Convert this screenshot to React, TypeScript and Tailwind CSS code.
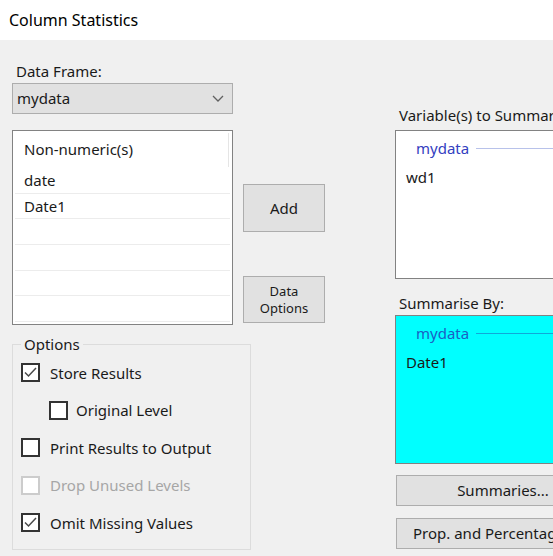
import React from "react";

const font = { fontFamily: '"Noto Sans", "Open Sans", sans-serif' };

function Check({ checked, disabled }: { checked?: boolean; disabled?: boolean }) {
  return (
    <div
      className={
        "w-[19px] h-[19px] shrink-0 border-2 bg-white flex items-center justify-center " +
        (disabled ? "border-[#cccccc]" : "border-[#333333]")
      }
    >
      {checked && (
        <svg width="15" height="15" viewBox="0 0 15 15">
          <polyline points="2,7.5 5.5,11 13,3" fill="none" stroke="#4a4a4a" strokeWidth="1.5" />
        </svg>
      )}
    </div>
  );
}

function Row({
  label,
  checked,
  disabled,
  indent,
}: {
  label: string;
  checked?: boolean;
  disabled?: boolean;
  indent?: boolean;
}) {
  return (
    <div className={"h-[37.5px] flex items-center " + (indent ? "pl-[36px]" : "pl-[8px]")}>
      <Check checked={checked} disabled={disabled} />
      <span
        className={
          "text-[15px] leading-[20px] " +
          (indent ? "ml-[8px] " : "ml-[10px] ") +
          (disabled ? "text-[#a6a6a6]" : "text-[#1a1a1a]")
        }
      >
        {label}
      </span>
    </div>
  );
}

function GroupHeader({ cyan }: { cyan?: boolean }) {
  return (
    <div className="h-[34px] flex items-center pl-[20px]">
      <span className={"text-[15px] leading-[20px] " + (cyan ? "text-[#1b5fc4]" : "text-[#3340c0]")}>
        mydata
      </span>
      <div className={"flex-1 h-px ml-[7px] " + (cyan ? "bg-[#10a8d8]" : "bg-[#b8c2ea]")} />
    </div>
  );
}

export default function App() {
  return (
    <div className="w-[553px] h-[556px] overflow-hidden bg-[#f0f0f0] text-[#1a1a1a]" style={font}>
      <div className="h-[40px] bg-white flex items-center pl-[9px] text-[16px] text-black">
        Column Statistics
      </div>
      <div className="flex pl-[12px]">
        {/* Left */}
        <div className="w-[313px] shrink-0 flex flex-col">
          <div className="mt-[21px] h-[20px] leading-[20px] pl-[4px] text-[15px]">Data Frame:</div>
          <div className="mt-[2px] w-[221px] h-[31px] bg-[#e1e1e1] border border-[#adadad] flex items-center pl-[4px] pr-[8px] text-[15px]">
            <span className="flex-1">mydata</span>
            <svg width="12" height="7" viewBox="0 0 12 7">
              <polyline points="1,1 6,6 11,1" fill="none" stroke="#606060" strokeWidth="1.3" />
            </svg>
          </div>
          <div className="mt-[16px] flex">
            <div className="w-[221px] h-[195px] bg-white border border-[#828282] p-[2px] pt-0 flex flex-col">
              <div className="h-[37px] flex items-center">
                <span className="flex-1 pl-[9px] text-[15px]">Non-numeric(s)</span>
                <div className="w-px h-[34px] mt-[2px] bg-[#e5e5e5] mr-[1px]" />
              </div>
              {["date", "Date1", "", "", "", ""].map((t, i) => (
                <div
                  key={i}
                  className="h-[25.7px] shrink-0 border-b border-[#ececec] flex items-center pl-[9px] text-[15px]"
                >
                  {t}
                </div>
              ))}
            </div>
            <div className="ml-[10px] w-[82px] flex flex-col">
              <button className="mt-[54px] h-[48px] bg-[#e1e1e1] border border-[#adadad] text-[15px]">
                Add
              </button>
              <button className="mt-[44px] h-[47px] bg-[#e1e1e1] border border-[#adadad] text-[13px] leading-[17px]">
                Data
                <br />
                Options
              </button>
            </div>
          </div>
          <fieldset className="mt-[9px] w-[239px] h-[216px] border border-[#dcdcdc]">
            <legend className="ml-[8px] px-[3px] text-[15px] leading-[20px]">Options</legend>
            <Row label="Store Results" checked />
            <Row label="Original Level" indent />
            <Row label="Print Results to Output" />
            <Row label="Drop Unused Levels" disabled />
            <Row label="Omit Missing Values" checked />
          </fieldset>
        </div>
        {/* Right */}
        <div className="ml-[70px] w-[215px] shrink-0 flex flex-col">
          <div className="mt-[65px] h-[20px] leading-[20px] pl-[4px] text-[15px] whitespace-nowrap">
            Variable(s) to Summarise:
          </div>
          <div className="mt-[5px] h-[149px] bg-white border border-[#828282] flex flex-col">
            <GroupHeader />
            <div className="pl-[10px] h-[24px] flex items-center text-[15px]">wd1</div>
          </div>
          <div className="mt-[14px] h-[20px] leading-[20px] pl-[4px] text-[15px]">Summarise By:</div>
          <div className="mt-[2px] h-[149px] bg-[#00ffff] border border-[#828282] flex flex-col">
            <GroupHeader cyan />
            <div className="pl-[10px] h-[24px] flex items-center text-[15px]">Date1</div>
          </div>
          <button className="mt-[11px] ml-[1px] h-[31px] bg-[#e1e1e1] border border-[#adadad] text-[15px]">
            Summaries...
          </button>
          <button className="mt-[12px] ml-[1px] h-[31px] bg-[#e1e1e1] border border-[#adadad] text-[15px] text-left pl-[16px] whitespace-nowrap">
            Prop. and Percentages...
          </button>
        </div>
      </div>
    </div>
  );
}
